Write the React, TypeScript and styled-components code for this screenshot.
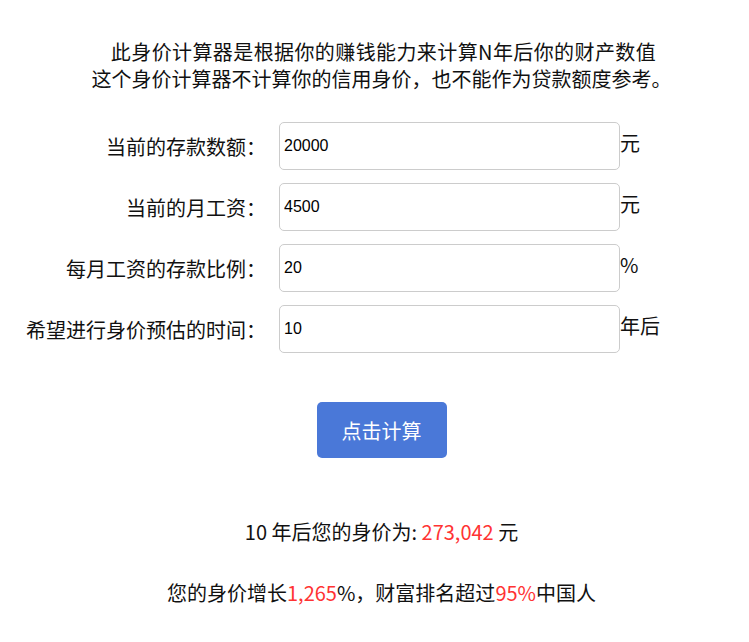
import React from "react";
import styled, { createGlobalStyle } from "styled-components";

const GlobalStyle = createGlobalStyle`
  html, body { margin: 0; padding: 0; background: #fff; }
  body {
    font-family: "Noto Sans CJK SC", "Noto Sans", sans-serif;
    color: #111;
  }
`;

const Page = styled.div`
  width: 749px;
  box-sizing: border-box;
  padding: 38px 0 0 14px;
`;

const Intro = styled.div`
  text-align: center;
  font-size: 20px;
  line-height: 27px;
`;

const IntroLine = styled.div<{ $indent?: boolean }>`
  text-indent: ${(p) => (p.$indent ? "4px" : "0")};
  letter-spacing: ${(p) => (p.$indent ? "0.4px" : "0")};
`;

const Form = styled.div`
  margin-top: 30px;
  display: flex;
  flex-direction: column;
  gap: 13px;
`;

const Row = styled.div`
  display: grid;
  grid-template-columns: 265px 341px auto;
  align-items: center;
`;

const Label = styled.label`
  font-size: 20px;
  text-align: right;
  padding-right: 13px;
  white-space: nowrap;
`;

const Input = styled.input`
  box-sizing: border-box;
  width: 341px;
  height: 48px;
  border: 1px solid #ccc;
  border-radius: 5px;
  padding: 0 4px;
  font-family: "Liberation Sans", Arial, sans-serif;
  font-size: 16px;
  color: #000;
  background: #fff;
  outline: none;
`;

const Unit = styled.span`
  font-size: 20px;
  line-height: 20px;
  margin-top: -6px;
`;

const ButtonWrap = styled.div`
  display: flex;
  justify-content: center;
  margin-top: 49px;
`;

const CalcButton = styled.button`
  width: 130px;
  height: 56px;
  border: none;
  border-radius: 5px;
  background: #4a78d8;
  color: #fff;
  font-family: "Noto Sans CJK SC", sans-serif;
  font-size: 20px;
  cursor: pointer;
`;

const Result = styled.div<{ $gap: number }>`
  margin-top: ${(p) => p.$gap}px;
  text-align: center;
  font-size: 20px;
  line-height: 26px;
`;

const Red = styled.span`
  color: #f33;
`;

const fields = [
  { label: "当前的存款数额：", value: "20000", unit: "元" },
  { label: "当前的月工资：", value: "4500", unit: "元" },
  { label: "每月工资的存款比例：", value: "20", unit: "%" },
  { label: "希望进行身价预估的时间：", value: "10", unit: "年后" },
];

export default function App() {
  return (
    <>
      <GlobalStyle />
      <Page>
        <Intro>
          <IntroLine $indent>此身价计算器是根据你的赚钱能力来计算N年后你的财产数值</IntroLine>
          <IntroLine>这个身价计算器不计算你的信用身价，也不能作为贷款额度参考。</IntroLine>
        </Intro>
        <Form>
          {fields.map((f) => (
            <Row key={f.label}>
              <Label>{f.label}</Label>
              <Input defaultValue={f.value} />
              <Unit>{f.unit}</Unit>
            </Row>
          ))}
        </Form>
        <ButtonWrap>
          <CalcButton>点击计算</CalcButton>
        </ButtonWrap>
        <Result $gap={61}>
          10 年后您的身价为: <Red>273,042</Red> 元
        </Result>
        <Result $gap={35}>
          您的身价增长<Red>1,265</Red>%，财富排名超过<Red>95%</Red>中国人
        </Result>
      </Page>
    </>
  );
}
